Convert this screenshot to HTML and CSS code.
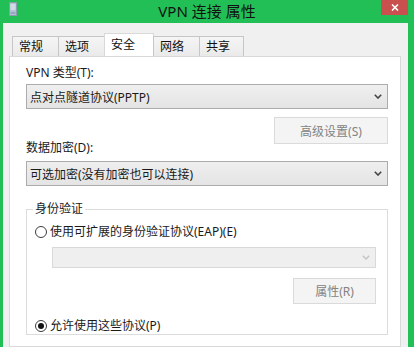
FILE: index.html
```html
<!DOCTYPE html>
<html>
  <head>
    <meta charset="utf-8" />
    <title>VPN 连接 属性</title>
    <link rel="stylesheet" href="styles.css">
  </head>
  <body>
    <div id="window">
      <div id="titlebar">
        <div class="tb-left">
          <svg class="app-icon" width="8" height="14" viewBox="0 0 8 14">
            <rect x="0.5" y="0.5" width="7" height="13" fill="#b4c3d3" stroke="#8c9caf" />
            <line x1="1.5" y1="3" x2="6.5" y2="3" stroke="#eef3f8" />
            <line x1="1.5" y1="5" x2="6.5" y2="5" stroke="#eef3f8" />
            <line x1="1.5" y1="7" x2="6.5" y2="7" stroke="#eef3f8" />
            <line x1="1.5" y1="11" x2="6.5" y2="11" stroke="#6f8eb0" />
          </svg>
        </div>
        <div class="title">VPN 连接 属性</div>
        <div class="tb-right">
          <div class="close">
            <svg width="8" height="7" viewBox="0 0 8 7">
              <path d="M1 0.5 L7 6.5 M7 0.5 L1 6.5" stroke="#fff" stroke-width="1.6" />
            </svg>
          </div>
        </div>
      </div>
      <div id="frame">
        <div class="tabs">
          <div class="tab tab-first">常规</div>
          <div class="tab">选项</div>
          <div class="tab tab-on">安全</div>
          <div class="tab">网络</div>
          <div class="tab tab-last">共享</div>
        </div>
        <div class="panel">
          <div class="label">VPN 类型(T):</div>
          <div class="select">
            <span>点对点隧道协议(PPTP)</span>
            <svg class="chev" width="8" height="5" viewBox="0 0 8 5"><path d="M0.8 0.8 L4 4 L7.2 0.8" fill="none" stroke="#444" stroke-width="1.6" /></svg>
          </div>
          <div class="btn-row"><button class="btn btn-adv" disabled>高级设置(S)</button></div>
          <div class="label label-up">数据加密(D):</div>
          <div class="select">
            <span>可选加密(没有加密也可以连接)</span>
            <svg class="chev" width="8" height="5" viewBox="0 0 8 5"><path d="M0.8 0.8 L4 4 L7.2 0.8" fill="none" stroke="#444" stroke-width="1.6" /></svg>
          </div>
          <fieldset class="group">
            <legend>身份验证</legend>
            <div class="radio"><span class="circle"></span>使用可扩展的身份验证协议(EAP)(E)</div>
            <div class="select select-off">
              <span></span>
              <svg class="chev" width="8" height="5" viewBox="0 0 8 5"><path d="M0.8 0.8 L4 4 L7.2 0.8" fill="none" stroke="#c4c4c4" stroke-width="1.4" /></svg>
            </div>
            <div class="btn-row"><button class="btn btn-prop" disabled>属性(R)</button></div>
            <div class="radio radio-on"><span class="circle"></span>允许使用这些协议(P)</div>
          </fieldset>
        </div>
      </div>
    </div>
  </body>
</html>
```

FILE: styles.css
```css
* {
  box-sizing: border-box;
  font-family: "Noto Sans", "Noto Sans CJK SC", sans-serif;
}
body {
  margin: 0;
  background-color: #22bf56;
  width: 414px;
  height: 347px;
  overflow: hidden;
}
#window {
  display: flex;
  flex-direction: column;
  height: 347px;
}
#titlebar {
  display: grid;
  grid-template-columns: 1fr auto 1fr;
  height: 23px;
}
.tb-left {
  padding: 2px 0 0 9px;
}
.app-icon {
  display: block;
}
.title {
  font-size: 15px;
  line-height: 23px;
  color: #111;
  padding-top: 0;
}
.tb-right {
  display: flex;
  justify-content: flex-end;
  align-items: flex-start;
  padding-right: 6px;
}
.close {
  width: 27px;
  height: 15px;
  background-color: #c9504f;
  display: flex;
  justify-content: center;
  align-items: center;
}
.close svg {
  display: block;
}
#frame {
  flex: 1;
  display: flex;
  flex-direction: column;
  margin: 0 6px 0 3px;
  padding-top: 10px;
  background-color: #f0f0f0;
}
.tabs {
  display: flex;
  align-items: flex-end;
  margin-left: 9px;
  height: 24px;
}
.tab {
  height: 21px;
  width: 47px;
  margin-left: -1px;
  padding-left: 6px;
  font-size: 12px;
  line-height: 20px;
  color: #111;
  border: 1px solid #c6c6c6;
  border-bottom-color: #d9d9d9;
  background: linear-gradient(#f5f5f5, #eaeaea);
}
.tab-first {
  margin-left: 0;
}
.tab-last {
  width: 45px;
}
.tab-on {
  height: 24px;
  width: 50px;
  line-height: 21px;
  border-color: #d9d9d9;
  border-bottom: none;
  background: #fff;
}
.panel {
  flex: 1;
  margin: -1px 7px 0 6px;
  padding: 8px 12px 0 16px;
  background-color: #fff;
  border: 1px solid #d9d9d9;
}
.label {
  font-size: 12px;
  line-height: 16px;
  color: #1a1a1a;
}
.label-up {
  margin-top: -4px;
}
.select {
  display: flex;
  align-items: center;
  justify-content: space-between;
  height: 25px;
  margin-top: 3px;
  padding: 0 5px 0 3px;
  font-size: 12px;
  color: #1a1a1a;
  border: 1px solid #acacac;
  background: linear-gradient(#efefef, #e4e4e4);
}
.label-up + .select {
  margin-top: 5px;
}
.chev {
  display: block;
}
.btn-row {
  display: flex;
  justify-content: flex-end;
  margin-top: 8px;
}
.btn {
  height: 27px;
  width: 114px;
  font-size: 12px;
  color: #838383;
  background-color: #f4f4f4;
  border: 1px solid #dadada;
  padding: 0;
}
.group {
  margin: 15px 0 0 0;
  padding: 0 11px 0 8px;
  border: 1px solid #dcdcdc;
  min-width: 0;
}
.group legend {
  font-size: 12px;
  line-height: 16px;
  color: #1a1a1a;
  padding: 0 2px;
  margin-left: -2px;
}
.radio {
  display: flex;
  align-items: center;
  margin-top: 7px;
  font-size: 12px;
  line-height: 16px;
  color: #1a1a1a;
}
.circle {
  width: 12px;
  height: 12px;
  margin-right: 3px;
  border: 1px solid #3c3c3c;
  border-radius: 50%;
  background-color: #fff;
  display: flex;
  justify-content: center;
  align-items: center;
}
.radio-on {
  margin-top: 14px;
}
.radio-on .circle::after {
  content: "";
  width: 6px;
  height: 6px;
  border-radius: 50%;
  background-color: #111;
}
.select-off {
  height: 21px;
  margin: 7px 0 0 17px;
  border-color: #d9d9d9;
  background: #efefef;
}
.group .btn-row {
  margin-top: 10px;
}
.btn-prop {
  height: 26px;
  width: 83px;
}
```
